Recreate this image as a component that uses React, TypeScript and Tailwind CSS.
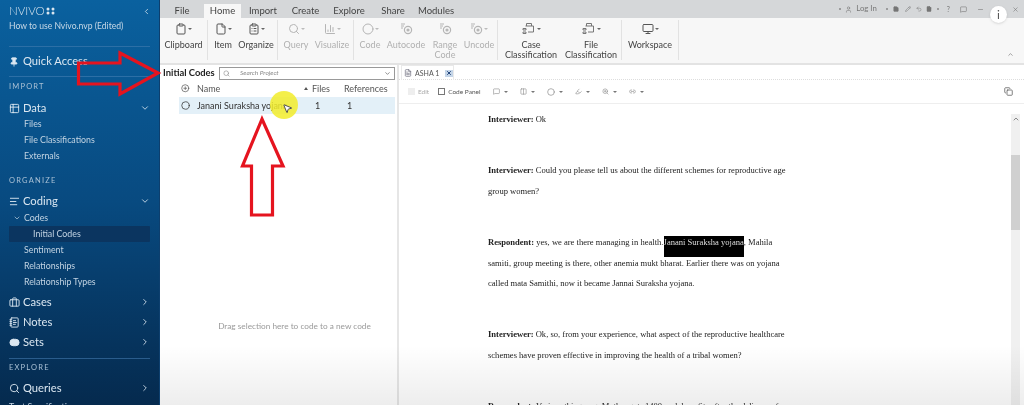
import React from "react";
import { Pin, Table2, ChevronDown, ChevronRight, ChevronLeft, ChevronUp, AlignLeft, Briefcase, NotebookText, ToggleRight, Search, Clipboard, File, ClipboardList, ChartColumn, Circle, Monitor, User, Minus, X, MessageSquare, Pencil, Undo2, Save, FileText, Highlighter, ZoomIn, Link2, PlusCircle, MousePointer2, Copy, Columns2 } from "lucide-react";

const Sub = ({ children, active, indent, mt }: { children: React.ReactNode; active?: boolean; indent?: boolean; mt?: boolean }) => (
  <div className={`h-[16px] flex items-center text-[8.8px] text-[#c3d4e3] whitespace-nowrap ${mt ? "mt-[1px]" : ""} ${active ? "bg-[#0b3560] mx-[9px] pl-[24px] rounded-[1px]" : indent ? "pl-[13px]" : "pl-[24px]"}`}>
    {children}
  </div>
);

const Section = ({ label, pt }: { label: string; pt: string }) => (
  <div className={`${pt} pl-[9px] text-[7.5px] tracking-[0.16em] text-[#a9c0d5] leading-[10px]`}>{label}</div>
);

const Main = ({ icon, label, chevron, h }: { icon: React.ReactNode; label: string; chevron?: "d" | "r"; h: string }) => (
  <div className={`${h} flex items-center pl-[9px] pr-[9px] text-[#dbe7f1] text-[11.2px]`}>
    <span className="w-[11px] mr-[3px] flex items-center">{icon}</span>
    <span className="flex-1">{label}</span>
    {chevron === "d" && <ChevronDown size={10} />}
    {chevron === "r" && <ChevronRight size={10} />}
  </div>
);

const Caret = ({ dim }: { dim?: boolean }) => (
  <span className={`ml-[1px] w-0 h-0 border-x-[2px] border-x-transparent border-t-[2px] ${dim ? "border-t-[#bbb]" : "border-t-[#666]"}`} />
);

const CodeIcon = () => (
  <svg width="13" height="13" viewBox="0 0 13 13" fill="none" stroke="currentColor" strokeWidth="1.2">
    <path d="M1 2h4M1 4h3M1 6h2" />
    <circle cx="8" cy="8" r="3.6" />
    <circle cx="8" cy="8" r="1" fill="currentColor" />
  </svg>
);

const ClassIcon = () => (
  <svg width="14" height="13" viewBox="0 0 14 13" fill="none" stroke="#777" strokeWidth="1">
    <path d="M4.500 4V1.500h5V4M3.500 4h8v6H6" />
    <path d="M1 6.500h3v1.500H1zM1 10h3v1.500H1z" />
  </svg>
);

const Tool = ({ icon, w, lines, dim, caret = true }: { icon: React.ReactNode; w: string; lines: string[]; dim?: boolean; caret?: boolean }) => (
  <div className={`${w} shrink-0 flex flex-col items-center ${dim ? "text-[#b5b5b5]" : "text-[#555]"}`}>
    <div className="h-[17px] flex items-center">{icon}{caret && <Caret dim={dim} />}</div>
    <div className={`mt-[3px] text-center text-[9px] leading-[10px] whitespace-nowrap ${dim ? "text-[#b0b0b0]" : "text-[#444]"}`}>
      {lines.map((l) => <div key={l}>{l}</div>)}
    </div>
  </div>
);

const Sep = () => <div className="w-px h-[40px] bg-[#e2e2e2] shrink-0" />;

const Tab = ({ w, label, active }: { w: string; label: string; active?: boolean }) => (
  <div className={`${w} shrink-0 h-[14px] mt-[4px] flex items-center justify-center text-[9.5px] text-[#444] ${active ? "bg-[#f7f7f7]" : ""}`}>{label}</div>
);

const DocTool = ({ icon }: { icon: React.ReactNode }) => (
  <div className="flex items-center gap-[4px] text-[#888]">{icon}<span className="w-0 h-0 border-x-[2px] border-x-transparent border-t-[2px] border-t-[#777]" /></div>
);

const L = ({ children }: { children: React.ReactNode }) => <div className="h-[20.4px] leading-[20.4px] whitespace-nowrap">{children}</div>;
const P = ({ children }: { children: React.ReactNode }) => <div className="mb-[31px]">{children}</div>;

export default function App() {
  return (
    <div className="relative w-[1024px] h-[405px] overflow-hidden flex bg-white blur-[0.4px]" style={{ fontFamily: "Lato, 'Liberation Sans', sans-serif" }}>
      {/* Sidebar */}
      <aside className="w-[160px] h-full shrink-0 overflow-hidden bg-gradient-to-b from-[#0a619f] via-[#084a80] to-[#052a4e] border-r border-[#0d3f6e]">
        <div className="h-[47px] border-b border-[#2c6fa6] mx-[9px]">
          <div className="pt-[5px] flex items-center text-[#d9e5ef] text-[11.5px] leading-[12px] font-light">
            <span>NVIVO</span>
            <svg width="10" height="8" viewBox="0 0 10 8" className="ml-[1px] fill-current">
              <circle cx="2" cy="2" r="1.5" /><circle cx="7" cy="2" r="1.5" />
              <circle cx="2" cy="6" r="1.5" /><circle cx="7" cy="6" r="1.5" />
            </svg>
            <span className="flex-1" />
            <ChevronLeft size={9} className="mr-[-1px]" />
          </div>
          <div className="mt-[3px] text-[8.6px] leading-[12px] text-[#c7d8e6] whitespace-nowrap">How to use Nvivo.nvp (Edited)</div>
        </div>
        <div className="h-[30px] mx-[9px] border-b border-[#2c6fa6] flex items-center text-[#dbe7f1] text-[11.2px] whitespace-nowrap">
          <Pin size={10} className="mr-[4px] fill-current" /> Quick Access
        </div>
        <Section label="IMPORT" pt="pt-[5px]" />
        <div className="mt-[8px]"><Main h="h-[16px]" icon={<Table2 size={11} />} label="Data" chevron="d" /></div>
        <Sub>Files</Sub>
        <Sub>File Classifications</Sub>
        <Sub>Externals</Sub>
        <Section label="ORGANIZE" pt="pt-[12px]" />
        <div className="mt-[7px]"><Main h="h-[16px]" icon={<AlignLeft size={11} />} label="Coding" chevron="d" /></div>
        <Sub indent mt><ChevronDown size={8} className="mr-[3px]" />Codes</Sub>
        <Sub active>Initial Codes</Sub>
        <Sub>Sentiment</Sub>
        <Sub>Relationships</Sub>
        <Sub>Relationship Types</Sub>
        <div className="mt-[2px]"><Main h="h-[20px]" icon={<Briefcase size={11} />} label="Cases" chevron="r" /></div>
        <Main h="h-[20px]" icon={<NotebookText size={11} />} label="Notes" chevron="r" />
        <Main h="h-[20px]" icon={<ToggleRight size={11} className="fill-current" />} label="Sets" chevron="r" />
        <div className="mx-[9px] mt-[6px] border-t border-[#2a5c8c]" />
        <Section label="EXPLORE" pt="pt-[4px]" />
        <div className="mt-[7px]"><Main h="h-[16px]" icon={<Search size={11} />} label="Queries" chevron="r" /></div>
        <div className="mt-[3px] pl-[9px] text-[8.8px] leading-[16px] text-[#c3d4e3] whitespace-nowrap">Text Specification</div>
      </aside>

      {/* Right */}
      <div className="flex-1 min-w-0 h-full flex flex-col">
        {/* Tabs */}
        <div className="h-[18px] shrink-0 bg-[#d5d7d9] flex items-start relative">
          <Tab w="w-[44px]" label="File" />
          <Tab w="w-[37px]" label="Home" active />
          <Tab w="w-[44px]" label="Import" />
          <Tab w="w-[41px]" label="Create" />
          <Tab w="w-[46px]" label="Explore" />
          <Tab w="w-[42px]" label="Share" />
          <Tab w="w-[44px]" label="Modules" />
          <div className="flex-1" />
          <div className="h-[18px] flex items-center text-[#777] text-[8px] pr-[5px]">
            <span className="w-[2px] h-[2px] rounded-full bg-[#888] mr-[4px]" />
            <User size={7} className="mr-[4px]" />
            <span className="text-[7.8px] mr-[9px]">Log In</span>
            <span className="w-[2px] h-[2px] rounded-full bg-[#888] mr-[5px]" />
            <Save size={6} className="mr-[6px] fill-current" />
            <Pencil size={6} className="mr-[5px]" />
            <Undo2 size={6} className="mr-[4px]" />
            <FileText size={6} className="mr-[5px] fill-current" />
            <span className="w-[2px] h-[2px] rounded-full bg-[#888] mr-[8px]" />
            <span className="text-[7px] mr-[10px]">?</span>
            <MessageSquare size={7} className="mr-[10px]" />
            <Minus size={7} className="mr-[28px]" />
            <X size={7} />
          </div>
        </div>
        {/* Ribbon */}
        <div className="h-[45px] shrink-0 bg-[#f7f7f7] flex items-start pt-[2px] relative">
          <Tool w="w-[47px]" icon={<Clipboard size={12} />} lines={["Clipboard"]} />
          <Sep />
          <Tool w="w-[30px]" icon={<File size={12} />} lines={["Item"]} />
          <Tool w="w-[36px]" icon={<ClipboardList size={12} />} lines={["Organize"]} />
          <div className="w-[3px]" />
          <Sep />
          <Tool w="w-[36px]" dim icon={<Search size={12} />} lines={["Query"]} />
          <Tool w="w-[36px]" dim icon={<ChartColumn size={12} />} lines={["Visualize"]} />
          <div className="w-[3px]" />
          <Sep />
          <Tool w="w-[32px]" dim icon={<Circle size={12} />} lines={["Code"]} />
          <Tool w="w-[40px]" dim caret={false} icon={<CodeIcon />} lines={["Autocode"]} />
          <Tool w="w-[38px]" dim caret={false} icon={<CodeIcon />} lines={["Range", "Code"]} />
          <Tool w="w-[30px]" dim icon={<CodeIcon />} lines={["Uncode"]} />
          <div className="w-[3px]" />
          <Sep />
          <Tool w="w-[66px]" icon={<ClassIcon />} lines={["Case", "Classification"]} />
          <Tool w="w-[54px]" icon={<ClassIcon />} lines={["File", "Classification"]} />
          <div className="w-[3px]" />
          <Sep />
          <Tool w="w-[56px]" icon={<Monitor size={12} />} lines={["Workspace"]} />
          <Sep />
          <div className="flex-1" />
          <ChevronUp size={7} className="absolute right-[10px] bottom-[5px] text-[#666]" />
        </div>
        <div className="h-[2px] shrink-0 bg-[#e3e3e3]" />

        {/* Body */}
        <div className="flex-1 min-h-0 flex">
          {/* List panel */}
          <section className="w-[239px] shrink-0 border-r-2 border-[#e6e6e6] flex flex-col">
            <div className="h-[16px] flex items-center pl-[3px]">
              <span className="w-[56px] text-[9.4px] font-bold text-[#222] whitespace-nowrap">Initial Codes</span>
              <div className="w-[176px] h-[13px] border border-[#999] flex items-center px-[3px] text-[#888]">
                <Search size={7} />
                <span className="ml-[10px] flex-1 italic text-[6.5px]">Search Project</span>
                <ChevronDown size={7} className="text-[#444]" />
              </div>
            </div>
            <div className="h-[15px] flex items-center text-[9px] text-[#555]">
              <div className="w-[37px] pl-[21px]"><PlusCircle size={8.5} /></div>
              <div className="w-[107px]">Name</div>
              <div className="w-[40px] flex items-center"><span className="w-0 h-0 mr-[4px] border-x-[2.5px] border-x-transparent border-b-[3px] border-b-[#555]" />Files</div>
              <div>References</div>
            </div>
            <div className="h-[17px] mt-[1px] ml-[19px] mr-[2px] bg-[#e3f0f8] flex items-center text-[9px] text-[#333]">
              <div className="w-[18px] pl-[2px]"><Circle size={9} /></div>
              <div className="w-[118px] whitespace-nowrap">Janani Suraksha yojana</div>
              <div className="w-[32px]">1</div>
              <div>1</div>
            </div>
            <div className="flex-1 flex items-center justify-center pt-[134px] pl-[32px]">
              <span className="text-[8.25px] text-[#9a9a9a] whitespace-nowrap">Drag selection here to code to a new code</span>
            </div>
          </section>

          {/* Document panel */}
          <section className="flex-1 min-w-0 flex flex-col">
            <div className="h-[15px] shrink-0 flex border-b border-dotted border-[#ddd] pl-[2px]">
              <div className="w-[53px] h-[15px] flex items-center border-x border-t border-[#e9e9e9] text-[7px] text-[#555] whitespace-nowrap">
                <FileText size={8} className="shrink-0 ml-[2px] mr-[3px] text-[#667]" />
                <span className="shrink-0">ASHA 1</span>
                <span className="shrink-0 ml-[6px] w-[8px] h-[7px] bg-[#c4d5e8] flex items-center justify-center"><X size={6} strokeWidth={4} className="text-[#24467c]" /></span>
              </div>
            </div>
            <div className="h-[24px] shrink-0 border-b border-[#eee] flex items-center pl-[9px] text-[6.5px] text-[#aaa]">
              <span className="w-[7px] h-[7px] bg-[#eee] mr-[3px]" />
              <span className="mr-[9px]">Edit</span>
              <span className="w-[7px] h-[7px] border border-[#777] mr-[3px]" />
              <span className="text-[#555] mr-[13px]">Code Panel</span>
              <div className="flex items-center gap-[12px]">
                <DocTool icon={<MessageSquare size={7} />} />
                <DocTool icon={<Columns2 size={7} />} />
                <DocTool icon={<Circle size={8} />} />
                <DocTool icon={<Highlighter size={7} />} />
                <DocTool icon={<ZoomIn size={7} />} />
                <DocTool icon={<Link2 size={7} />} />
              </div>
              <div className="flex-1" />
              <Copy size={9} className="mr-[11px] text-[#555]" />
            </div>
            <div className="flex-1 min-h-0 flex overflow-hidden">
              <div className="flex-1 min-w-0 pl-[89px] pt-[5px] text-[8.55px] text-[#222]" style={{ fontFamily: "'Liberation Serif', serif" }}>
                <P><L><b>Interviewer:</b> Ok</L></P>
                <P>
                  <L><b>Interviewer:</b> Could you please tell us about the different schemes for reproductive age</L>
                  <L>group women?</L>
                </P>
                <P>
                  <L><b>Respondent:</b> yes, we are there managing in health. <span className="relative inline-block -ml-[2px]"><span className="absolute left-0 top-[4px] w-full h-[21px] bg-black" /><span className="relative text-[#ddd]">Janani Suraksha yojana</span></span>, Mahila</L>
                  <L>samiti, group meeting is there, other anemia mukt bharat. Earlier there was on yojana</L>
                  <L>called mata Samithi, now it became Jannai Suraksha yojana.</L>
                </P>
                <P>
                  <L><b>Interviewer:</b> Ok, so, from your experience, what aspect of the reproductive healthcare</L>
                  <L>schemes have proven effective in improving the health of a tribal women?</L>
                </P>
                <P><L><b>Respondent:</b> Various things, eg. Mother gets 1400 cash benefits after the delivery of</L></P>
              </div>
              <div className="w-[9px] mr-[4px] mt-[10px] shrink-0 bg-[#f0f0f0] flex flex-col items-center pt-[1px]">
                <ChevronUp size={8} className="text-[#555]" />
                <div className="w-full h-[75px] mt-[32px] bg-[#d0d0d0]" />
              </div>
            </div>
          </section>
        </div>
      </div>

      {/* Video overlays */}
      <div className="absolute left-[160px] right-0 bottom-0 h-[60px] bg-gradient-to-b from-transparent to-[#00000012] pointer-events-none" />
      <div className="absolute left-[270px] top-[91px] w-[28px] h-[28px] rounded-full bg-[#f2ec2a] opacity-85" />
      <MousePointer2 size={11} className="absolute left-[282px] top-[103px] text-[#444] fill-white" />
      <svg className="absolute left-0 top-0 pointer-events-none" width="300" height="220" viewBox="0 0 300 220" fill="none" stroke="#e5141f" strokeWidth="3.2">
        <path d="M158 73 L120 53 V63 H78.500 V84 H120 V94 Z" />
        <path d="M262 119 L242.500 166 H251.500 V215 H272.500 V166 H283 Z" />
      </svg>
      <div className="absolute left-[990px] top-[6px] w-[17px] h-[17px] rounded-full bg-white flex items-center justify-center text-[#555] text-[12px] leading-none shadow-sm">i</div>
    </div>
  );
}
